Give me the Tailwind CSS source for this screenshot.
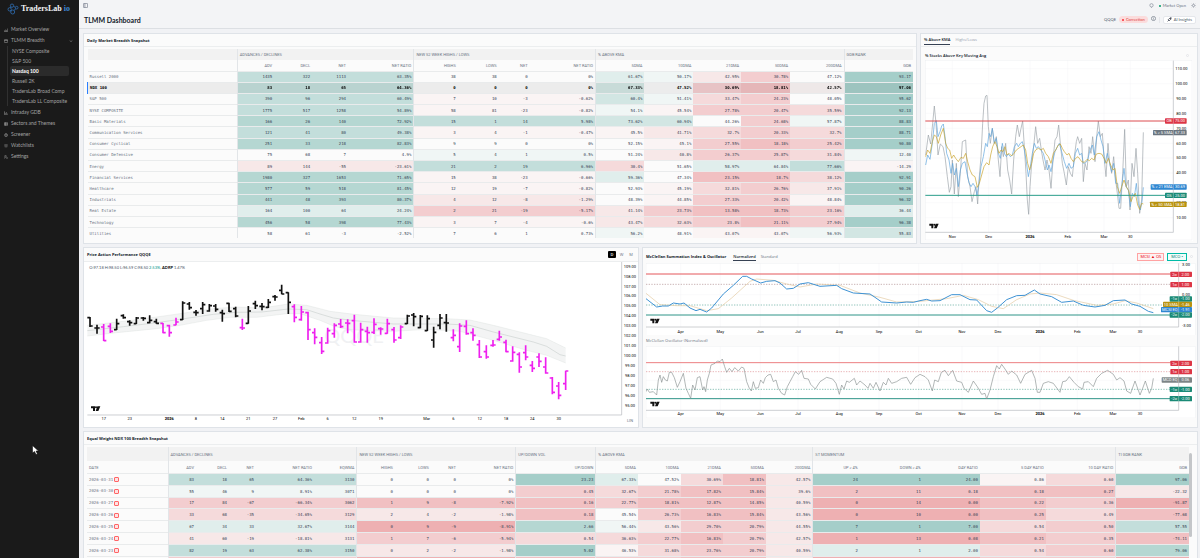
<!DOCTYPE html>
<html lang="en">
<head>
    <meta charset="UTF-8">
    <meta name="viewport" content="width=device-width, initial-scale=1.0">
    <title>TLMM Dashboard | TradersLab io</title>
    <script src="https://cdn.jsdelivr.net/npm/@tailwindcss/browser@4"></script>
</head>
<body class="flex h-screen overflow-hidden bg-[#f1f2f5] font-['Lato',sans-serif] text-[4px] leading-[5px] text-gray-900">
    <!-- Sidebar -->
    <aside class="flex w-[79px] shrink-0 flex-col bg-[#1a1a1a] text-[5px] text-[#a3a3a3]">
      <a href="#" class="flex h-[18px] items-center gap-[2px] pl-[7px]">
        <svg class="size-[12px]" viewBox="0 0 36 36" fill="none" stroke="#2f6fb5" stroke-width="2.4">
          <circle cx="15" cy="8" r="5"/><circle cx="8" cy="19" r="5"/><circle cx="17" cy="27" r="6"/><circle cx="29" cy="14" r="4"/><path d="M20 10l5 3M12 12l-2 3M11 23l2 1M21 22l6-5"/>
        </svg>
        <span class="font-['Liberation_Serif',serif] text-[8px] font-bold leading-[10px] text-gray-100">TradersLab <span class="text-[#3f86d6]">io</span></span>
      </a>
      <nav class="flex flex-col pt-[6px]">
        <a href="#" class="flex h-[11px] items-center gap-[3px] pl-[4px]"><svg class="size-[4px]" viewBox="0 0 24 24" fill="none" stroke="currentColor" stroke-width="3"><path d="M3 21v-7M10 21V9M16 21V12M22 21V3M1 22h22"/></svg>Market Overview</a>
        <a href="#" class="flex h-[11px] items-center gap-[3px] pl-[4px]"><svg class="size-[4px]" viewBox="0 0 24 24" fill="none" stroke="currentColor" stroke-width="3"><rect x="2" y="4" width="20" height="17" rx="2"/><path d="M2 9h20M7 4v5M17 4v5"/></svg>TLMM Breadth
          <svg class="ml-auto mr-[6px] size-[4px]" viewBox="0 0 24 24" fill="none" stroke="currentColor" stroke-width="3"><path d="M4 9l8 7 8-7"/></svg></a>
        <div class="ml-[7px] mr-[10px] flex flex-col border-l border-[#303030]">
          <a href="#" class="flex h-[10px] items-center pl-[4px]">NYSE Composite</a>
          <a href="#" class="flex h-[10px] items-center pl-[4px]">S&amp;P 500</a>
          <a href="#" class="ml-[2px] flex h-[10px] items-center rounded-[2px] bg-[#2b2b2b] pl-[2px] font-bold text-white">Nasdaq 100</a>
          <a href="#" class="flex h-[10px] items-center pl-[4px]">Russell 2K</a>
          <a href="#" class="flex h-[10px] items-center pl-[4px] whitespace-nowrap">TradersLab Broad Comp</a>
          <a href="#" class="flex h-[10px] items-center pl-[4px] whitespace-nowrap">TradersLab LL Composite</a>
        </div>
        <a href="#" class="mt-px flex h-[11px] items-center gap-[3px] pl-[4px]"><svg class="size-[4px]" viewBox="0 0 24 24" fill="none" stroke="currentColor" stroke-width="3"><path d="M3 2v20h20M9 17v-6M15 17V7M20 17v-3"/></svg>Intraday GDB</a>
        <a href="#" class="flex h-[11px] items-center gap-[3px] pl-[4px]"><svg class="size-[4px]" viewBox="0 0 24 24" fill="none" stroke="currentColor" stroke-width="3"><rect x="3" y="2" width="18" height="20" rx="2"/><path d="M3 9h18M3 15h18M9 2v20"/></svg>Sectors and Themes</a>
        <a href="#" class="flex h-[11px] items-center gap-[3px] pl-[4px]"><svg class="size-[4px]" viewBox="0 0 24 24" fill="none" stroke="currentColor" stroke-width="3"><circle cx="12" cy="13" r="9"/><path d="M12 2v11h9M5 13h7"/></svg>Screener</a>
        <a href="#" class="flex h-[11px] items-center gap-[3px] pl-[4px]"><svg class="size-[4px]" viewBox="0 0 24 24" fill="none" stroke="currentColor" stroke-width="3"><path d="M2 5h20M2 12h20M5 18h5M14 18h5"/></svg>Watchlists</a>
        <a href="#" class="flex h-[11px] items-center gap-[3px] pl-[4px]"><svg class="size-[4px]" viewBox="0 0 24 24" fill="none" stroke="currentColor" stroke-width="3"><circle cx="9" cy="7" r="5"/><path d="M1 22c0-6 4-8 8-8M18 12v4M18 20v3M13 18h10"/></svg>Settings</a>
      </nav>
    </aside>

    <main class="flex min-w-0 flex-1 flex-col">
      <header class="flex h-[29px] shrink-0 flex-col border-b border-[#dcdfe3] bg-[#f3f4f6] pl-[4px] pr-[4px]">
        <div class="flex h-[12px] items-center">
          <button aria-label="Toggle sidebar"><svg class="block size-[5px] text-gray-500" viewBox="0 0 24 24" fill="none" stroke="currentColor" stroke-width="3"><rect x="2" y="2" width="20" height="20" rx="3"/><path d="M9 2v20"/></svg></button>
          <div class="ml-auto flex items-center gap-[5px] text-gray-500">
            <button aria-label="Notifications"><svg class="block size-[5px]" viewBox="0 0 24 24" fill="none" stroke="currentColor" stroke-width="2.5"><circle cx="12" cy="11" r="8"/><path d="M10 22h4"/></svg></button>
            <span class="flex items-center gap-[2px]"><span class="size-[2px] rounded-full bg-emerald-600"></span>Market Open</span>
            <button aria-label="Theme"><svg class="block size-[5px]" viewBox="0 0 24 24" fill="none" stroke="currentColor" stroke-width="2.5"><circle cx="12" cy="12" r="5"/><path d="M12 1v3M12 20v3M1 12h3M20 12h3M4 4l2 2M18 18l2 2M4 20l2-2M18 6l2-2"/></svg></button>
          </div>
        </div>
        <div class="flex h-[17px] items-center pl-px">
          <h1 class="text-[7px] font-bold leading-[10px]">TLMM Dashboard</h1>
          <div class="ml-auto flex items-center gap-[3px]">
            <span class="text-gray-600">QQQE</span>
            <span class="flex h-[7px] items-center gap-[2px] rounded-full bg-[#fbdcdc] px-[3px] text-[#dc3b3b]"><span class="size-[2px] rounded-full bg-red-500"></span>Correction</span>
            <svg class="mb-[3px] size-[5px] text-gray-600" viewBox="0 0 24 24" fill="none" stroke="currentColor" stroke-width="2.5"><circle cx="12" cy="12" r="10"/><path d="M12 11v6M12 6v2"/></svg>
            <span class="h-[6px] w-px bg-gray-200"></span>
            <button class="flex h-[8px] items-center gap-[2px] rounded-[2px] border border-gray-200 bg-white px-[3px] text-gray-600"><svg class="size-[5px] text-gray-900" viewBox="0 0 24 24" fill="none" stroke="currentColor" stroke-width="3"><path d="M5 14l9-9 5 5-9 9zM14 5l6-2-1 7M3 21l4-4"/></svg>AI Insights</button>
          </div>
        </div>
      </header>

      <div class="flex flex-col gap-[3px] pb-[4px] pl-[4px] pr-[2px] pt-[4px]">
        <div class="grid grid-cols-[3fr_1fr] gap-[3px]">
          <section class="border border-[#dfe3e8] bg-[#fbfbfb]">
            <h2 class="flex h-[13px] items-center border-b border-[#eceeef] pl-[3px] font-['Open_Sans',sans-serif] font-bold">Daily Market Breadth Snapshot</h2>
            <div class="px-[3px] pb-[5px] pt-[2px]"><table id="daily" class="h-[189px] w-full table-fixed border-collapse"></table></div>
          </section>
          <section class="flex flex-col border border-[#dfe3e8] bg-[#fbfbfb]">
            <div class="flex h-[13px] items-center gap-[5px] border-b border-[#eceeef] pl-[3px] font-['Open_Sans',sans-serif]">
              <button class="h-[9px] border-b border-gray-700 font-semibold">% Above KMA</button>
              <button class="h-[9px] border-b border-transparent text-gray-400">Highs/Lows</button>
            </div>
            <h3 class="mt-[6px] flex items-center justify-between pl-[4px] pr-[8px] font-['Open_Sans',sans-serif] font-semibold">% Stocks Above Key Moving Avg<span class="size-[3px] rounded-full border border-gray-200"></span></h3>
            <div class="px-[4px] pt-[2px]"><svg id="kma" class="block w-full bg-white" viewBox="30 180 804 543"></svg></div>
          </section>
        </div>

        <div class="grid grid-cols-2 gap-[3px]">
          <section class="border border-[#dfe3e8] bg-[#fbfbfb]">
            <div class="flex h-[14px] items-center justify-between border-b border-[#eceeef] pl-[3px] pr-[3px] font-['Open_Sans',sans-serif]">
              <h2 class="font-bold">Price Action Performance QQQE</h2>
              <div class="flex items-center gap-[2px] text-gray-500">
                <button class="h-[7px] w-[8px] rounded-[1px] bg-black font-semibold text-white">D</button>
                <button class="h-[7px] w-[7px]">W</button>
                <button class="h-[7px] w-[8px]">M</button>
              </div>
            </div>
            <svg id="price" class="block w-full bg-white" viewBox="12 50 1662 496"></svg>
          </section>
          <section class="border border-[#dfe3e8] bg-[#fbfbfb] pl-[3px] pr-px">
            <div class="flex h-[15px] items-center pt-[2px] font-['Open_Sans',sans-serif]">
              <h2 class="font-bold">McClellan Summation Index &amp; Oscillator</h2>
              <button class="ml-[7px] h-[9px] border-b border-gray-700 font-semibold">Normalized</button>
              <button class="ml-[5px] h-[9px] border-b border-transparent text-gray-500">Standard</button>
              <span class="ml-auto flex h-[8px] items-center border border-red-300 bg-red-50 px-[2px] text-red-600">MCSI ▲ OS</span>
              <span class="ml-[3px] flex h-[8px] items-center border border-teal-500 bg-teal-50 px-[3px] text-teal-700">MCO •</span>
              <span class="ml-[3px] mr-[3px] size-[3px] rounded-full border border-gray-200"></span>
            </div>
            <svg id="mcsi" class="block w-full bg-white" viewBox="18 55 1650 216"></svg>
            <h3 class="mb-[3px] mt-[3px] font-['Open_Sans',sans-serif] text-gray-500">McClellan Oscillator (Normalized)</h3>
            <svg id="mco" class="block w-full bg-white" viewBox="18 303 1650 216"></svg>
          </section>
        </div>

        <section class="relative border border-[#dfe3e8] bg-[#fbfbfb]">
          <h2 class="flex h-[13px] items-center border-b border-[#eceeef] pl-[3px] font-['Open_Sans',sans-serif] font-bold">Equal Weight NDX 100 Breadth Snapshot</h2>
          <div class="pb-[3px] pl-[3px] pr-[8px] pt-[2px]"><table id="history" class="h-[120px] w-full table-fixed border-collapse"></table></div>
          <div class="absolute right-[5px] top-[21px] h-[84px] w-[3px] rounded-full bg-[#c4c6c9]"></div>
        </section>
      </div>
    </main>

    <svg class="absolute left-[32px] top-[445px] h-[10px] w-[7px]" viewBox="0 0 14 20"><path d="M1 1v15l4-3 3 6 3-1-3-6h5z" fill="#fff" stroke="#000" stroke-width="1"/></svg>

    <script>
    // heat scale: a-f green, 1-6 red, "." none
    const HEAT = {
      a: 'bg-[#f0f6f5]', b: 'bg-[#e0eeec]', c: 'bg-[#d2e6e3]', d: 'bg-[#c3dedb]', e: 'bg-[#b5d7d2]', f: 'bg-[#a5cec9]',
      1: 'bg-[#faf4f4]', 2: 'bg-[#f7e8e8]', 3: 'bg-[#f5dadb]', 4: 'bg-[#f3cdcf]', 5: 'bg-[#f1c0c2]', 6: 'bg-[#eeb0b2]',
      '.': ''
    };
    const ROW = 'border-t border-[#e9ebec]';
    const ROW_ON = 'border-t border-[#e9ebec] bg-[#ececec] font-bold text-black';
    const EDGE = 'border-l border-l-[#e2e5e8]';

    function buildTable(id, widths, groups, heads, rows, opts) {
      const starts = [];
      let n = 0;
      groups.forEach(g => { starts.push(n); n += g[1]; });
      const edge = i => starts.includes(i) && i > 0 ? EDGE : '';
      const total = widths.reduce((a, b) => a + b, 0);
      let html = '<colgroup>' + widths.map(w => `<col style="width:${w / total * 100}%">`).join('') + '</colgroup>';
      html += `<thead class="font-['Roboto',sans-serif] text-[4px] whitespace-nowrap text-gray-500"><tr class="${opts.groupRow}">`;
      groups.forEach((g, i) => { html += `<th colspan="${g[1]}" class="bg-[#f2f2f2] p-0 pl-[2px] text-left font-normal ${edge(starts[i])}">${g[0]}</th>`; });
      html += `</tr><tr class="${opts.headRow}">`;
      heads.forEach((h, i) => { html += `<th class="p-0 ${i ? 'pr-[2px] text-right' : 'pl-[2px] text-left'} font-normal ${edge(i)}">${h}</th>`; });
      html += `</tr></thead><tbody class="font-['DejaVu_Sans_Mono',monospace] text-[4px] text-gray-700">`;
      rows.forEach(row => {
        const on = row[0] === opts.active;
        html += `<tr class="${on ? ROW_ON : ROW}">`;
        html += `<th scope="row" class="truncate p-0 pl-[2px] text-left ${on ? 'border-l border-l-blue-500 font-bold' : 'font-normal text-gray-500'}">${row[0]}${opts.mark || ''}</th>`;
        row[1].split(' ').forEach((v, i) => {
          const heat = HEAT[row[2].replace(/ /g, '')[i]];
          html += `<td class="p-0 pr-[2px] text-right ${heat} ${on && heat ? 'brightness-95' : ''} ${edge(i + 1)}">${v}</td>`;
        });
        html += '</tr>';
      });
      document.getElementById(id).innerHTML = html + '</tbody>';
    }

    buildTable('daily',
      [150, 37, 38, 36, 66, 44, 41, 31, 66, 49, 49, 48, 49, 54, 69],
      [['', 1], ['ADVANCES / DECLINES', 4], ['NEW 52 WEEK HIGHS / LOWS', 4], ['% ABOVE KMA', 5], ['GDB RANK', 1]],
      ['', 'ADV', 'DECL', 'NET', 'NET RATIO', 'HIGHS', 'LOWS', 'NET', 'NET RATIO', '5DMA', '10DMA', '21DMA', '50DMA', '200DMA', 'GDB'],
      [
        ['Russell 2000', '1435 322 1113 63.35% 38 38 0 0% 61.67% 50.17% 42.95% 30.78% 47.12% 93.17', 'dddd .... ba24. f'],
        ['NDX 100', '83 18 65 64.36% 0 0 0 0% 67.33% 47.52% 30.69% 18.81% 42.57% 97.06', 'dddd .... c.451 f'],
        ['S&amp;P 500', '390 96 294 60.49% 7 10 -3 -0.62% 60.4% 51.41% 33.47% 24.23% 48.05% 95.62', 'dddd 1111 ca34. f'],
        ['NYSE COMPOSITE', '1775 517 1258 54.89% 58 81 -23 -0.82% 54.1% 45.54% 27.78% 20.47% 35.59% 92.13', 'dddd 1111 a1443 f'],
        ['Basic Materials', '166 26 140 72.92% 15 1 14 5.98% 73.62% 60.94% 44.26% 24.68% 57.87% 88.83', 'eeee dddd cc.4a f'],
        ['Communication Services', '121 41 80 49.38% 3 4 -1 -0.47% 45.5% 41.71% 32.7% 20.33% 32.7% 88.71', 'dddd 1111 12343 f'],
        ['Consumer Cyclical', '251 33 218 82.83% 9 9 0 0% 52.15% 45.1% 27.55% 18.18% 25.42% 90.80', 'eeee .... .1454 f'],
        ['Consumer Defensive', '75 68 7 4.9% 5 4 1 0.5% 51.24% 40.8% 26.37% 25.87% 31.84% 12.40', '.... aaaa .2443 a'],
        ['Energy', '89 144 -55 -23.61% 21 2 19 6.96% 30.4% 51.65% 58.97% 64.84% 77.66% -14.29', '2222 dddd 3.bbd 1'],
        ['Financial Services', '1980 327 1653 71.65% 15 38 -23 -0.66% 59.36% 47.34% 23.15% 18.7% 38.12% 92.91', 'eeee 1111 b.553 f'],
        ['Healthcare', '577 59 518 81.45% 12 19 -7 -0.82% 52.93% 45.19% 32.81% 26.76% 37.91% 90.26', 'eeee 1111 .1342 f'],
        ['Industrials', '441 48 393 80.37% 4 12 -8 -1.29% 48.39% 44.85% 27.33% 20.42% 48.84% 96.32', 'eeee 2222 .1441 f'],
        ['Real Estate', '164 100 64 24.24% 2 21 -19 -5.17% 41.14% 23.73% 13.58% 18.73% 23.16% 36.44', 'bbbb 4444 24554 b'],
        ['Technology', '456 58 398 77.43% 3 7 -4 -0.6% 43.47% 32.63% 23.8% 21.11% 27.94% 96.38', 'eeee 1111 23454 f'],
        ['Utilities', '58 61 -3 -2.52% 7 6 1 0.73% 56.2% 48.91% 43.07% 43.07% 56.93% 55.83', '.... .... a.11a c']
      ],
      { groupRow: 'h-[11px]', headRow: 'h-[11px]', active: 'NDX 100' });

    buildTable('history',
      [81, 28, 33, 27, 58, 43, 38, 36, 27, 58, 80, 42, 43, 42, 43, 47, 47, 63, 57, 66, 70, 73],
      [['', 1], ['ADVANCES / DECLINES', 5], ['NEW 52 WEEK HIGHS / LOWS', 4], ['UP/DOWN VOL', 1], ['% ABOVE KMA', 5], ['ST MOMENTUM', 5], ['TI GDB RANK', 1]],
      ['DATE', 'ADV', 'DECL', 'NET', 'NET RATIO', 'EQWMA', 'HIGHS', 'LOWS', 'NET', 'NET RATIO', 'UP/DOWN', '5DMA', '10DMA', '21DMA', '50DMA', '200DMA', 'UP &gt; 4%', 'DOWN &gt; 4%', 'DAY RATIO', '5 DAY RATIO', '10 DAY RATIO', 'GDB'],
      [
        ['2026-03-31', '83 18 65 64.36% 3130 0 0 0 0% 23.23 67.33% 47.52% 30.69% 18.81% 42.57% 24 1 24.00 0.86 0.60 97.06', 'ddddd .... f b.352 fff 13 f'],
        ['2026-03-30', '55 46 9 8.91% 3071 0 0 0 0% 0.45 32.67% 21.78% 17.82% 15.84% 39.6% 2 11 0.18 0.18 0.27 -22.32', 'aaaaa .... 4 34552 555 55 2'],
        ['2026-03-27', '17 84 -67 -66.34% 3062 1 9 -8 -7.92% 0.16 22.77% 18.81% 12.87% 14.85% 40.59% 0 14 0.00 0.22 0.36 -91.87', '44444 5555 5 45552 666 54 6'],
        ['2026-03-26', '33 68 -35 -34.65% 3129 2 4 -2 -1.98% 0.18 45.54% 26.73% 16.83% 15.84% 43.56% 0 10 0.00 0.25 0.49 -77.68', '33333 2222 5 .4552 666 53 5'],
        ['2026-03-25', '67 34 33 32.67% 3144 0 9 -9 -8.91% 2.66 56.44% 43.56% 29.70% 20.79% 44.55% 7 1 7.00 0.54 0.50 57.55', 'bbbbb 6666 e a2442 fff 34 d'],
        ['2026-03-24', '41 60 -19 -18.81% 3131 1 7 -6 -5.94% 0.54 36.63% 22.77% 16.83% 20.79% 42.57% 1 13 0.08 0.21 0.35 -74.11', '22222 4444 3 34542 666 54 5'],
        ['2026-03-23', '82 19 63 62.38% 3150 0 2 -2 -1.98% 5.02 46.53% 31.68% 23.76% 20.79% 40.59% 2 1 2.00 0.54 0.60 79.06', 'ddddd 2222 f 13442 bbb 34 e'],
        ['', ' '.repeat(20), '44444 6666 5 44552 666 44 6']
      ],
      { groupRow: 'h-[14px]', headRow: 'h-[12px]', mark: '<span class="ml-px inline-block size-[5px] rounded-[1px] border border-red-400 bg-red-100 align-middle"></span>' });

    // chart helpers, three units to one pixel
    const line = (x1, y1, x2, y2, c, w = 1, dash = '') => `<line x1="${x1}" y1="${y1}" x2="${x2}" y2="${y2}" stroke="${c}" stroke-width="${w}" stroke-dasharray="${dash}"/>`;
    const label = (x, y, t, extra = '') => `<text x="${x}" y="${y + 4}" text-anchor="middle" class="font-['Roboto',sans-serif] text-[12px] ${extra}">${t}</text>`;
    const curve = (pts, c, w = 2) => `<polyline points="${pts}" fill="none" stroke="${c}" stroke-width="${w}" stroke-linejoin="round"/>`;
    const tag = (x, axis, y, c, name, val) => `<rect x="${x}" y="${y - 8}" width="${axis + 40 - x}" height="16" rx="2" fill="${c}"/>` + line(axis, y - 8, axis, y + 8, '#fff') + label((x + axis) / 2, y, name, 'fill-white') + label(axis + 20, y, val, 'fill-white');
    const tvLogo = (x, y) => `<path d="M${x} ${y}h12v14h-6v-8h-6zM${x + 19} ${y}h9l-6 14h-8z" fill="#111"/><circle cx="${x + 15}" cy="${y + 3}" r="3" fill="#111"/>`;
    const shift = (pts, dx) => pts.split(' ').map(p => { const [x, y] = p.split(','); return (+x + dx) + ',' + y; }).join(' ');

    // % above key moving averages
    const kmaX = [[112, 'Nov'], [221, 'Dec'], [345, '2026'], [458, 'Feb'], [567, 'Mar'], [646, '30']];
    let s = '<rect x="31" y="182" width="800" height="538" fill="#fff" stroke="#e5e7eb"/>';
    kmaX.forEach(([x, t]) => { s += line(x, 182, x, 697, '#f0f1f3') + label(x, 709, t, t === '2026' ? 'font-bold' : ''); });
    ['110.00', '100.00', '90.00', '80.00', '70.00', '60.00', '50.00', '40.00', '30.00', '20.00', '10.00'].forEach((t, i) => {
      const y = Math.round(206 + i * 44.7);
      s += line(31, y, 775, y, '#f0f1f3') + label(799, y, t);
    });
    s += curve('32,465 40,405 47,432 53,370 58,318 63,370 69,465 76,432 84,440 90,470 97,530 103,577 108,560 112,480 118,582 124,490 130,590 136,520 142,425 152,420 158,530 165,560 171,605 178,575 183,560 188,612 192,540 198,470 203,370 207,310 212,288 216,286 220,380 226,430 232,385 238,430 244,410 250,480 255,530 260,440 265,470 272,430 278,510 284,540 290,582 296,480 302,410 307,375 313,410 318,385 323,363 328,440 333,520 337,600 341,643 345,560 350,490 357,430 362,380 368,430 374,415 379,450 384,480 390,510 396,480 402,510 408,565 414,480 420,420 426,410 431,375 436,430 442,490 448,520 454,555 460,500 466,520 472,530 478,470 484,425 488,410 494,430 500,415 505,545 510,490 516,510 522,440 528,460 533,410 540,485 546,400 550,363 556,410 562,400 567,470 573,530 579,430 584,490 590,520 596,470 602,540 607,580 612,625 617,625 623,520 629,388 634,560 640,540 645,630 651,490 657,530 663,445 668,520 674,640 680,600 685,397', '#9aa2a8');
    s += curve('32,495 38,465 45,478 52,430 58,370 64,362 69,410 75,395 80,378 85,372 90,410 95,460 102,480 108,520 113,490 118,525 124,505 130,560 136,510 142,490 150,485 156,520 162,548 168,560 174,550 180,560 186,585 192,550 198,500 205,470 212,430 217,440 222,400 227,410 232,385 238,430 244,415 250,460 256,475 262,430 268,460 274,470 280,462 286,470 292,465 298,440 305,430 310,440 316,430 322,425 328,450 334,485 340,530 346,500 352,460 358,430 364,445 370,440 378,450 385,460 390,480 397,510 402,495 408,515 414,480 420,455 427,440 433,430 440,455 448,485 455,505 462,490 468,505 475,500 481,460 488,445 494,465 500,460 505,490 512,488 518,480 525,450 532,435 538,465 545,410 552,395 558,420 564,440 570,490 577,460 584,490 590,515 596,490 602,550 608,550 614,610 620,560 627,505 633,560 640,570 646,620 652,580 658,590 664,550 670,610 676,630 681,605 685,562', '#5ba3dc');
    s += curve('32,470 38,450 45,460 52,425 58,405 64,410 70,430 77,405 85,385 92,430 98,445 104,450 110,475 116,465 122,475 130,485 138,472 145,475 152,460 158,485 165,510 172,525 180,530 187,562 193,550 200,525 207,500 215,488 222,495 227,465 233,440 240,425 246,440 252,460 258,450 264,455 270,440 276,465 282,460 290,468 297,460 304,450 311,445 318,440 325,435 332,450 338,490 344,510 350,490 356,460 362,450 370,445 378,450 385,445 392,460 400,470 408,490 415,460 422,450 430,435 436,432 442,445 448,455 456,465 462,460 468,475 475,485 482,475 489,470 495,478 500,485 508,487 516,478 523,482 530,475 537,480 544,462 552,460 560,462 567,475 574,490 580,475 587,495 594,510 600,505 607,560 614,580 620,560 627,540 634,560 641,572 648,605 654,590 661,580 668,615 674,628 680,610 685,612', '#c9a227');
    s += line(31, 363, 755, 363, '#dc4c50', 3) + line(31, 586, 755, 586, '#2a9d8a', 3);
    s += line(775, 182, 775, 697, '#b5b8bd', 2) + line(31, 697, 775, 697, '#b5b8bd', 2);
    s += tag(750, 775, 363, '#dc3545', 'OB', '75.00') + tag(714, 775, 398, '#6b7680', '% &gt; 5 SMA', '67.33') + tag(707, 775, 561, '#2e86d1', '% &gt; 21 EMA', '30.69') + tag(750, 775, 586, '#1a8a76', 'OS', '25.00') + tag(705, 775, 613, '#b8920f', '% &gt; 50 SMA', '18.81');
    document.getElementById('kma').innerHTML = s + tvLogo(43, 671);

    // price bars: x, high, low, open, close
    const K = '#111', M = '#ee20ee';
    const bars = [
      [K, '30,215,245,217,242 51,238,265,248,248'], [M, '71,236,287,245,286 91,234,263,243,258'],
      [K, '110,220,254,253,235 130,207,220,211,217 149,225,241,229,232 169,215,236,235,218 190,215,226,218,219 209,210,234,232,225 229,220,235,229,234'],
      [M, '249,233,264,234,262 268,238,274,241,262 288,217,240,239,230'],
      [K, '308,168,224,223,173 328,170,193,176,187 348,194,211,201,202 368,170,206,190,178 388,176,199,197,181 407,176,199,182,192 427,193,229,202,205 447,172,200,174,198 467,184,216,190,212'],
      [M, '487,220,254,247,248'],
      [K, '505,182,235,234,197 526,166,191,175,181 546,173,195,183,184 565,161,188,186,171 585,149,166,154,155 605,118,147,135,146 625,141,206,142,171'],
      [M, '643,177,231,184,216 664,182,226,223,200 684,199,284,202,253 704,249,297,262,276 725,275,326,292,318 743,247,295,293,256 763,234,277,265,240 782,221,248,236,244 803,222,264,233,234 823,208,292,226,290 842,232,292,290,253 862,244,292,258,262 882,219,266,261,237 902,246,268,250,251 922,220,265,264,235 942,245,292,253,284 962,240,281,277,245'],
      [K, '982,208,236,235,212 1001,203,243,209,214 1021,209,249,247,213 1042,210,257,256,220 1061,244,307,284,261 1080,206,252,240,218 1099,206,259,232,233'],
      [M, '1120,252,288,277,270 1139,234,320,304,242 1159,225,268,243,265 1179,249,286,262,270 1198,284,338,298,335 1219,300,340,319,335 1239,284,304,300,299 1258,256,286,282,275 1278,283,321,291,319 1298,303,349,347,321 1318,321,382,327,365 1337,300,345,322,335 1357,347,380,360,369 1377,324,365,335,348 1397,336,385,365,383 1417,395,447,398,441 1436,410,462,422,450 1457,376,434,415,377']
    ];
    const bandTop = '22,240 130,228 230,215 300,205 400,190 467,185 546,188 625,176 680,180 720,190 750,198 823,207 940,218 1100,220 1170,224 1240,240 1360,270 1400,280 1457,308';
    const bandMid = '22,256 130,244 230,232 300,222 400,207 467,201 546,200 625,191 680,193 720,206 760,218 823,226 940,236 1100,236 1170,240 1240,260 1360,290 1400,303 1440,328 1457,332';
    const bandLow = '1457,353 1400,330 1340,315 1240,285 1140,258 1040,252 940,258 840,255 790,250 760,242 720,225 660,205 620,205 530,216 450,216 380,225 300,240 230,250 110,262 22,272';
    s = `<text x="822" y="293" text-anchor="middle" class="fill-[#f0f1f3] font-['Lato',sans-serif] text-[60px]">QQQE</text>`;
    s += `<polygon points="${bandTop} ${bandLow}" fill="#a8b4b0" fill-opacity=".14"/>` + curve(bandTop, '#d5dad8', 1) + curve(bandMid, '#ccd2d0', 2) + curve(bandLow, '#d5dad8', 1);
    bars.forEach(([c, list]) => list.split(' ').forEach(b => {
      const [x, h, l, o, cl] = b.split(',').map(Number);
      s += `<path d="M${x} ${h}V${l}M${x - 8} ${o}H${x}M${x} ${cl}H${x + 8}" stroke="${c}" stroke-width="5"/>`;
    }));
    s += line(1625, 50, 1625, 509, '#b5b8bd', 2) + line(22, 509, 1625, 509, '#b5b8bd', 2);
    for (let p = 109, i = 0; p >= 95; p--, i++) s += label(1650, Math.round(63 + i * 29.8), p + '.00');
    [[71, '17'], [149, '23'], [268, '2026'], [348, '8'], [427, '14'], [505, '21'], [585, '27'], [664, 'Feb'], [743, '6'], [823, '12'], [902, '19'], [1040, 'Mar'], [1120, '6'], [1199, '12'], [1278, '18'], [1357, '24'], [1436, '30']].forEach(([x, t]) => { s += label(x, 520, t, t === '2026' ? 'font-bold' : ''); });
    s += label(1650, 526, 'LIN', 'fill-gray-500') + tvLogo(33, 483);
    s += `<text x="28" y="71" class="fill-gray-600 font-['Lato',sans-serif] text-[12px]">O:97.18 H:98.50 L:96.59 C:98.50 <tspan class="fill-teal-600">2.53%</tspan>, <tspan class="fill-black font-bold">ADRP</tspan> 1.47%</text>`;
    document.getElementById('price').innerHTML = s;

    const months = [[122, 'Apr'], [241, 'May'], [361, 'Jun'], [474, 'Jul'], [598, 'Aug'], [717, 'Sep'], [836, 'Oct'], [966, 'Nov'], [1074, 'Dec'], [1200, '2026'], [1312, 'Feb'], [1419, 'Mar'], [1500, '30']];
    function frame(y0, y1, yt) {
      let f = `<rect x="18" y="${y0}" width="1649" height="${yt + 12 - y0}" fill="#fff" stroke="#e5e7eb"/>`;
      months.forEach(([x, t]) => { f += line(x, y0, x, y1, '#eff0f2') + label(x, yt, t, t === '2026' ? 'font-bold' : ''); });
      return f + line(1616, y0, 1616, y1, '#b5b8bd', 2) + line(18, y1, 1616, y1, '#b5b8bd', 2);
    }

    // summation index
    s = frame(56, 247, 260) + line(18, 150, 1616, 150, '#eff0f2');
    s += line(18, 88, 1596, 88, '#e4575b', 3) + line(18, 119, 1596, 119, '#b08f92', 2, '4 4') + line(18, 181, 1596, 181, '#5aa89a', 2, '4 4') + line(18, 211, 1596, 211, '#2f9488', 3);
    s += curve('18,146 60,180 110,183 150,183 200,198 235,192 275,160 330,110 350,103 400,107 440,118 480,127 530,118 600,122 660,145 720,158 770,172 ' + shift('0,170 80,162 130,152 175,165 215,185 250,192 290,165 330,148 360,145 410,150 460,167 530,182 580,178 615,168 650,175 700,192', 840), '#e3c9a0');
    s += curve('18,162 50,187 68,184 85,184 100,175 120,178 132,175 150,190 168,198 180,194 200,202 215,190 250,148 280,122 308,95 320,95 335,103 362,115 380,110 405,108 420,115 440,133 460,131 480,118 505,114 540,125 590,122 605,132 640,145 690,148 705,158 725,172 770,175 800,172 820,173 ' + shift('0,168 20,164 35,169 60,168 95,150 120,150 150,165 170,166 200,198 215,203 232,190 260,165 290,153 315,152 343,136 360,148 395,156 425,173 460,169 490,182 525,187 555,182 580,168 615,166 635,178 660,185 685,200 700,204', 840), '#3f93d4', 3);
    s += label(1638, 61, '3.00') + label(1638, 149, '0.00') + label(1640, 242, '-3.00');
    s += tag(1591, 1616, 89, '#dc3545', '2σ', '2.00') + tag(1591, 1616, 120, '#dc3545', '1σ', '1.00') + tag(1589, 1616, 163, '#1a8a76', '-1σ', '-1.00') + tag(1569, 1616, 179, '#b8920f', '10 SMA', '-1.46') + tag(1563, 1616, 195, '#2e86d1', 'MCSI EQ', '-1.91') + tag(1589, 1616, 211, '#1a8a76', '-2σ', '-2.00');
    document.getElementById('mcsi').innerHTML = s + tvLogo(31, 222);

    // oscillator
    s = frame(304, 496, 507) + line(18, 406, 1616, 406, '#eff0f2');
    s += line(18, 353, 1596, 353, '#ec7f82', 3) + line(18, 380, 1596, 380, '#df9295', 2, '4 4') + line(18, 433, 1596, 433, '#5aa89a', 2, '4 4') + line(18, 461, 1596, 461, '#2f9488', 3);
    s += curve('18,440 22,432 28,442 40,440 50,450 55,405 60,390 65,412 70,395 76,405 82,408 88,382 95,382 103,398 112,427 120,410 130,385 138,430 145,445 152,460 158,420 165,435 172,398 180,395 188,435 192,425 197,440 202,405 208,385 213,360 225,355 232,348 240,350 247,342 254,365 260,382 268,370 276,380 284,368 295,378 305,366 312,370 320,410 328,430 334,438 340,410 346,430 355,428 362,405 370,415 376,398 384,390 392,388 400,410 408,405 415,430 425,445 434,450 442,425 450,410 458,395 466,380 476,388 485,376 492,400 505,402 512,418 526,432 540,410 560,397 578,402 588,415 598,448 605,420 612,432 620,408 628,412 643,400 650,420 660,408 675,420 684,430 690,415 700,430 708,412 720,438 730,412 738,420 745,400 755,415 770,410 785,400 800,397 812,418 825,398 ' + shift('0,388 15,395 25,405 37,438 44,405 55,410 64,382 75,376 85,392 98,376 110,408 125,412 132,430 145,442 160,408 172,425 185,448 195,445 200,462 210,435 220,395 230,362 238,372 245,358 255,372 265,388 275,378 290,390 302,415 315,388 335,376 345,400 352,442 360,442 370,415 385,410 400,415 420,442 428,410 438,408 448,395 462,412 475,425 488,432 492,412 505,410 520,425 530,400 545,385 563,376 580,388 590,405 600,398 612,408 620,438 632,445 645,408 660,450 668,430 676,408 688,445 695,430 700,400', 840), '#8b9292');
    s += tag(1591, 1616, 355, '#dc3545', '2σ', '2.00') + tag(1591, 1616, 380, '#dc3545', '1σ', '1.00') + tag(1565, 1616, 405, '#7d8586', 'MCO EQ', '0.06') + tag(1589, 1616, 433, '#1a8a76', '-1σ', '-1.00') + tag(1589, 1616, 461, '#1a8a76', '-2σ', '-2.00');
    document.getElementById('mco').innerHTML = s + tvLogo(31, 470);
    </script>
</body>
</html>
